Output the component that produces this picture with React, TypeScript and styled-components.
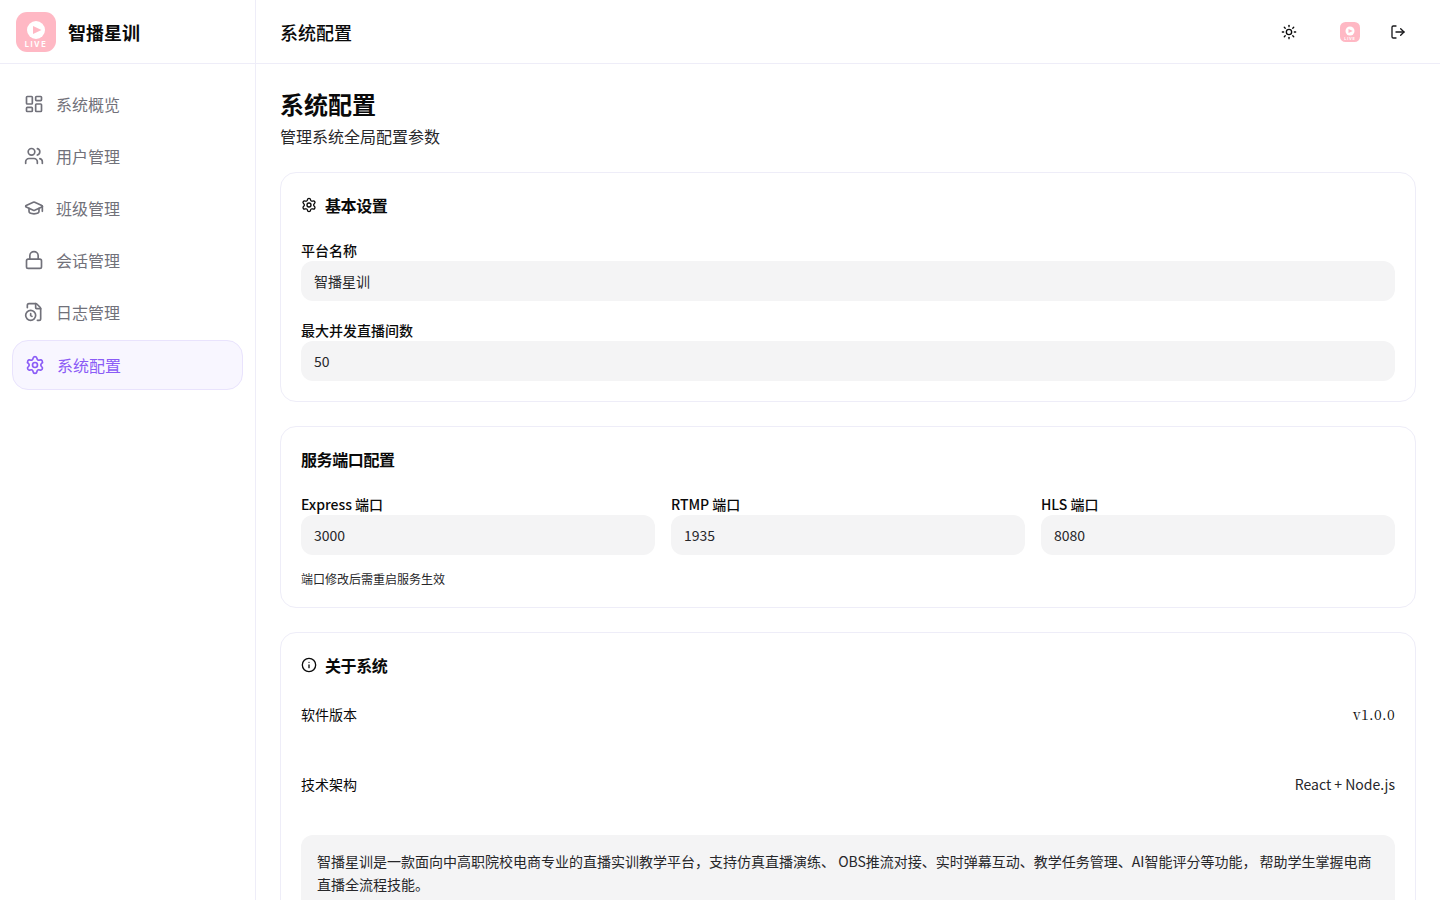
import React from 'react';
import styled, { createGlobalStyle } from 'styled-components';
import { LayoutDashboard, Users, GraduationCap, Lock, FileClock, Settings, Sun, LogOut, Info } from 'lucide-react';

const Global = createGlobalStyle`
  html, body { margin: 0; height: 100%; overflow: hidden; }
  body { font-family: "Noto Sans CJK SC", "Noto Sans", sans-serif; color: #0a0a0a; background: #fff; }
  * { box-sizing: border-box; }
`;
const Shell = styled.div`display: flex; height: 900px; overflow: hidden;`;
const Sidebar = styled.aside`width: 256px; flex: none; border-right: 1px solid #eeedf8; display: flex; flex-direction: column;`;
const Brand = styled.div`height: 64px; border-bottom: 1px solid #eeedf8; display: flex; align-items: center; gap: 12px; padding-left: 16px;`;
const BrandName = styled.span`font-size: 18px; font-weight: 700;`;
const Nav = styled.nav`padding: 16px 12px; display: flex; flex-direction: column; gap: 4px;`;
const NavItem = styled.div<{ $active?: boolean }>`
  display: flex; align-items: center; gap: 12px; padding: 12px; font-size: 16px; line-height: 24px; border-radius: 16px;
  color: ${p => (p.$active ? '#8b5cf6' : '#71717a')};
  background: ${p => (p.$active ? '#f8f6ff' : 'transparent')};
  border: ${p => (p.$active ? '1px solid #e9e3fd' : 'none')};
`;
const Main = styled.div`flex: 1; min-width: 0; display: flex; flex-direction: column;`;
const Header = styled.header`height: 64px; flex: none; border-bottom: 1px solid #eeedf8; display: flex; align-items: center; padding: 0 24px; justify-content: space-between;`;
const HeaderTitle = styled.h1`margin: 0; font-size: 18px; font-weight: 500;`;
const HeaderActions = styled.div`display: flex; align-items: center; gap: 12px;`;
const IconBtn = styled.div`width: 36px; height: 36px; display: flex; align-items: center; justify-content: center; color: #18181b;`;
const ThemeBtn = styled(IconBtn)`margin-right: 13px; color: #0a0a0a;`;
const Content = styled.main`padding: 24px; display: flex; flex-direction: column; gap: 24px;`;
const PageHead = styled.div`display: flex; flex-direction: column; gap: 4px;`;
const PageTitle = styled.h2`margin: 0; font-size: 24px; line-height: 32px; font-weight: 700;`;
const PageSub = styled.p`margin: 0; font-size: 16px; line-height: 24px; color: #27272a;`;
const Card = styled.section`border: 1px solid #eeedf8; border-radius: 16px; padding: 20px; display: flex; flex-direction: column; flex: none;`;
const CardTitle = styled.h3`margin: 0 0 24px; font-size: 16px; line-height: 24px; font-weight: 600; letter-spacing: -0.4px; display: flex; align-items: center; gap: 8px;`;
const Fields = styled.div`display: flex; flex-direction: column; gap: 20px;`;
const Field = styled.label`display: flex; flex-direction: column;`;
const Label = styled.span`font-size: 14px; line-height: 18px; font-weight: 500; margin-bottom: 2px;`;
const Value = styled.div`height: 40px; border-radius: 12px; background: #f4f4f5; padding: 0 13px; display: flex; align-items: center; font-size: 14px; color: #27272a;`;
const Ports = styled.div`display: grid; grid-template-columns: repeat(3, 1fr); gap: 16px;`;
const Hint = styled.p`margin: 16px 0 0; font-size: 12px; line-height: 16px; color: #27272a;`;
const Rows = styled.div`display: flex; flex-direction: column; gap: 42px; margin-top: -1px;`;
const Row = styled.div`display: flex; justify-content: space-between; align-items: center; height: 28px; font-size: 14px;`;
const Mono = styled.span`font-family: "Noto Serif CJK SC", serif; font-size: 14px; letter-spacing: 0.35px; line-height: 20px;`;
const Plain = styled.span`font-size: 14px; color: #27272a;`;
const About = styled.div`background: #f4f4f5; border-radius: 12px; padding: 15px 16px 17px; font-size: 14px; line-height: 23px; color: #27272a; margin-top: 37px;`;

const Logo = ({ size }: { size: number }) => (
  <svg width={size} height={size} viewBox="0 0 40 40">
    <rect width="40" height="40" rx="11" fill="#ffb8c4" />
    <circle cx="20" cy="18" r="9" fill="#fff" />
    <path d="M17 14 L25.5 18 L17 22 Z" fill="#ffb8c4" />
    <text x="20" y="35" fontSize="7.5" fontWeight="700" fill="#fff" textAnchor="middle" letterSpacing="1.5" fontFamily="Inter, sans-serif">LIVE</text>
  </svg>
);

const items = [
  { icon: LayoutDashboard, label: '系统概览' },
  { icon: Users, label: '用户管理' },
  { icon: GraduationCap, label: '班级管理' },
  { icon: Lock, label: '会话管理' },
  { icon: FileClock, label: '日志管理' },
  { icon: Settings, label: '系统配置', active: true },
];

export default function App() {
  return (
    <Shell>
      <Global />
      <Sidebar>
        <Brand><Logo size={40} /><BrandName>智播星训</BrandName></Brand>
        <Nav>
          {items.map(({ icon: Icon, label, active }) => (
            <NavItem key={label} $active={active}><Icon size={20} strokeWidth={2} />{label}</NavItem>
          ))}
        </Nav>
      </Sidebar>
      <Main>
        <Header>
          <HeaderTitle>系统配置</HeaderTitle>
          <HeaderActions>
            <ThemeBtn><Sun size={16} /></ThemeBtn>
            <IconBtn><Logo size={20} /></IconBtn>
            <IconBtn><LogOut size={16} /></IconBtn>
          </HeaderActions>
        </Header>
        <Content>
          <PageHead>
            <PageTitle>系统配置</PageTitle>
            <PageSub>管理系统全局配置参数</PageSub>
          </PageHead>
          <Card>
            <CardTitle><Settings size={16} />基本设置</CardTitle>
            <Fields>
              <Field><Label>平台名称</Label><Value>智播星训</Value></Field>
              <Field><Label>最大并发直播间数</Label><Value>50</Value></Field>
            </Fields>
          </Card>
          <Card>
            <CardTitle>服务端口配置</CardTitle>
            <Ports>
              <Field><Label>Express 端口</Label><Value>3000</Value></Field>
              <Field><Label>RTMP 端口</Label><Value>1935</Value></Field>
              <Field><Label>HLS 端口</Label><Value>8080</Value></Field>
            </Ports>
            <Hint>端口修改后需重启服务生效</Hint>
          </Card>
          <Card>
            <CardTitle><Info size={16} />关于系统</CardTitle>
            <Rows>
              <Row><span>软件版本</span><Mono>v1.0.0</Mono></Row>
              <Row><span>技术架构</span><Plain>React + Node.js</Plain></Row>
            </Rows>
            <About>智播星训是一款面向中高职院校电商专业的直播实训教学平台，支持仿真直播演练、 OBS推流对接、实时弹幕互动、教学任务管理、AI智能评分等功能， 帮助学生掌握电商直播全流程技能。</About>
          </Card>
        </Content>
      </Main>
    </Shell>
  );
}
